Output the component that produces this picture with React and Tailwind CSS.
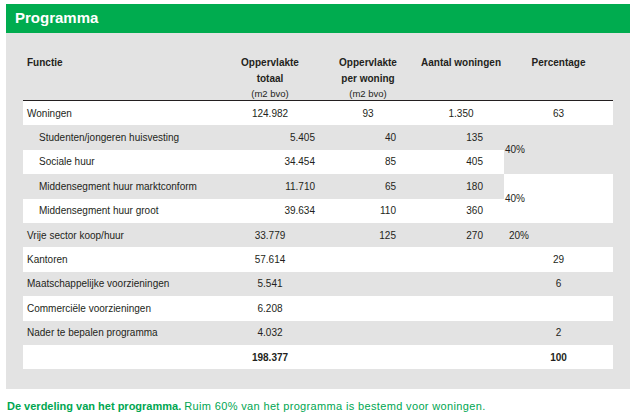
import React from 'react';

const font = { fontFamily: '"Liberation Sans", Arial, sans-serif' };

// row background: white rows alternate with the panel gray
const rows = [
  { label: 'Woningen', white: true, opp: '124.982', per: '93', aantal: '1.350', pct: '63' },
  { label: 'Studenten/jongeren huisvesting', sub: true, opp: '5.405', per: '40', aantal: '135', merged: { text: '40%', white: false } },
  { label: 'Sociale huur', sub: true, white: true, opp: '34.454', per: '85', aantal: '405' },
  { label: 'Middensegment huur marktconform', sub: true, opp: '11.710', per: '65', aantal: '180', merged: { text: '40%', white: true } },
  { label: 'Middensegment huur groot', sub: true, white: true, opp: '39.634', per: '110', aantal: '360' },
  { label: 'Vrije sector koop/huur', opp: '33.779', per: '125', aantal: '270', pctLeft: '20%' },
  { label: 'Kantoren', white: true, opp: '57.614', pct: '29' },
  { label: 'Maatschappelijke voorzieningen', opp: '5.541', pct: '6' },
  { label: 'Commerciële voorzieningen', white: true, opp: '6.208', pct: '' },
  { label: 'Nader te bepalen programma', opp: '4.032', pct: '2' },
  { label: '', white: true, opp: '198.377', pct: '100', total: true },
];

function Cell({ children, className = '' }) {
  return <div className={`flex items-center ${className}`}>{children}</div>;
}

function Row({ r }) {
  const bg = r.white ? 'bg-white' : '';
  const bold = r.total ? 'font-bold' : '';
  // the sub rows and the vrije sector row put their figures to the right
  const right = r.sub || r.pctLeft;
  return (
    <>
      <Cell className={`${bg} ${r.sub ? 'pl-[16px]' : 'pl-[4px]'}`}>{r.label}</Cell>
      <Cell className={`${bg} ${bold} ${r.sub ? 'justify-end pr-[3px]' : 'justify-center'}`}>{r.opp}</Cell>
      <Cell className={`${bg} ${right ? 'justify-end pr-[22px]' : 'justify-center'}`}>{r.per}</Cell>
      <Cell className={`${bg} ${right ? 'justify-end pr-[21px]' : 'justify-center'}`}>{r.aantal}</Cell>
      {r.merged && (
        <Cell className={`row-span-2 pl-[1px] ${r.merged.white ? 'bg-white' : ''}`}>{r.merged.text}</Cell>
      )}
      {r.pctLeft && <Cell className="pl-[5px]">{r.pctLeft}</Cell>}
      {r.pct !== undefined && <Cell className={`${bg} ${bold} justify-center`}>{r.pct}</Cell>}
    </>
  );
}

export default function App() {
  return (
    <div className="min-h-screen bg-white pt-[4px] px-[6px] text-[#231f20]" style={font}>
      {/* Title bar */}
      <div className="h-[29px] bg-[#00ac4f] flex items-center pl-[9px]">
        <h1 className="text-[15px] font-bold text-white">Programma</h1>
      </div>

      {/* Table panel */}
      <div className="bg-[#e3e3e3] px-[17px] pt-[21px] pb-[20px] text-[10px]">
        <div className="grid grid-cols-[199px_96px_100px_86px_109px] h-[47px] border-b border-[#231f20] font-bold">
          <div className="pl-[4px] leading-[17px]">Functie</div>
          <div className="flex flex-col items-center">
            <span className="leading-[17px]">Oppervlakte</span>
            <span className="leading-[16px]">totaal</span>
            <span className="leading-[13px] text-[9.5px] font-normal">(m2 bvo)</span>
          </div>
          <div className="flex flex-col items-center">
            <span className="leading-[17px]">Oppervlakte</span>
            <span className="leading-[16px]">per woning</span>
            <span className="leading-[13px] text-[9.5px] font-normal">(m2 bvo)</span>
          </div>
          <div className="text-center leading-[17px]">Aantal woningen</div>
          <div className="text-center leading-[17px]">Percentage</div>
        </div>
        <div className="grid grid-cols-[199px_96px_100px_86px_109px] auto-rows-[24.4px]">
          {rows.map((r, i) => (
            <Row key={i} r={r} />
          ))}
        </div>
      </div>

      <p className="mt-[10px] pl-[1px] text-[11px] leading-[14px] text-[#00a651]">
        <span className="font-bold">De verdeling van het programma.</span>{' '}
        <span className="tracking-[0.35px]">Ruim 60% van het programma is bestemd voor woningen.</span>
      </p>
    </div>
  );
}
